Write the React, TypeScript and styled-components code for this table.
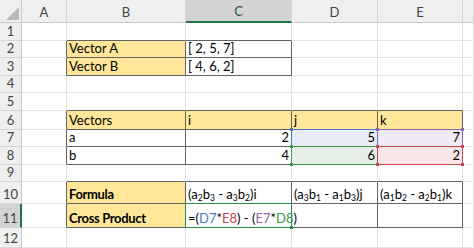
import React from 'react';
import styled, { createGlobalStyle } from 'styled-components';

const GlobalStyle = createGlobalStyle`
  html, body {
    margin: 0;
    padding: 0;
    background: #ffffff;
    overflow: hidden;
  }
  body {
    font-family: Lato, 'Liberation Sans', Arial, sans-serif;
  }
`;

const GRID = '#e1e1e1';
const DARK = '#626262';
const YELLOW = '#ffe699';

const COLS = ['A', 'B', 'C', 'D', 'E', 'F'];
const ROW_HEIGHTS = [18, 17, 18, 17, 18, 19, 17, 18, 17, 22, 24, 20];

const Sheet = styled.div`
  display: grid;
  grid-template-columns: 22px 45px 119px 106px 86px 85px 1fr;
  grid-template-rows: 23px ${ROW_HEIGHTS.map((h) => `${h}px`).join(' ')};
  width: 474px;
  height: 248px;
  overflow: hidden;
  font-size: 13px;
  color: #000;
`;

const Corner = styled.div`
  background: #efefef;
  border-right: 1px solid #c8c8c8;
  border-bottom: 1px solid #c8c8c8;
  box-sizing: border-box;
  display: flex;
  align-items: flex-end;
  justify-content: flex-end;
  padding: 0 2px 2px 0;
`;

const ColHead = styled.div<{ $selected?: boolean }>`
  box-sizing: border-box;
  background: ${({ $selected }) => ($selected ? '#d3d3d3' : '#efefef')};
  border-right: 1px solid #d6d6d6;
  border-bottom: ${({ $selected }) => ($selected ? '2px solid #217346' : '1px solid #c8c8c8')};
  color: ${({ $selected }) => ($selected ? '#1e5c3a' : '#444')};
  display: flex;
  align-items: center;
  justify-content: center;
  padding-top: 1px;
  font-size: 13px;
`;

const RowHead = styled.div<{ $selected?: boolean }>`
  box-sizing: border-box;
  background: ${({ $selected }) => ($selected ? '#d3d3d3' : '#efefef')};
  border-right: ${({ $selected }) => ($selected ? '2px solid #217346' : '1px solid #c8c8c8')};
  border-bottom: 1px solid #d6d6d6;
  color: #444;
  display: flex;
  align-items: flex-end;
  justify-content: center;
  padding-bottom: 1px;
  font-size: 13px;
`;

const Cell = styled.div<{
  $fill?: string;
  $bold?: boolean;
  $right?: boolean;
  $rb: string;
  $bb: string;
}>`
  position: relative;
  box-sizing: border-box;
  background: ${({ $fill }) => $fill || '#fff'};
  border-right: 1px solid ${({ $rb }) => $rb};
  border-bottom: 1px solid ${({ $bb }) => $bb};
  font-weight: ${({ $bold }) => ($bold ? 700 : 400)};
  letter-spacing: ${({ $bold }) => ($bold ? '-0.35px' : 'normal')};
  display: flex;
  align-items: flex-end;
  justify-content: ${({ $right }) => ($right ? 'flex-end' : 'flex-start')};
  padding: 0 2px 1px 2px;
  white-space: nowrap;
  line-height: 15px;

  sub {
    font-size: 8.5px;
    vertical-align: -2px;
    line-height: 0;
  }
`;

const CellText = styled.span`
  position: relative;
  z-index: 2;
`;

const RangeBox = styled.div<{ $color: string }>`
  position: absolute;
  top: -1px;
  left: -1px;
  right: -1px;
  bottom: -1px;
  border: 1px solid ${({ $color }) => $color};
  z-index: 1;
  pointer-events: none;
`;

const Handle = styled.span<{ $color: string; $v: 'top' | 'bottom'; $h: 'left' | 'right' }>`
  position: absolute;
  width: 3px;
  height: 3px;
  background: ${({ $color }) => $color};
  ${({ $v }) => $v}: -2px;
  ${({ $h }) => $h}: -2px;
`;

const Ref = styled.span<{ $color: string }>`
  color: ${({ $color }) => $color};
`;

const BLUE = '#4a76c6';
const RED = '#c4454f';
const PURPLE = '#8a68b0';
const GREEN = '#3a9a4e';

type CellDef = {
  v?: React.ReactNode;
  fill?: string;
  bold?: boolean;
  right?: boolean;
  box?: boolean;
  range?: string;
  handles?: boolean;
};

const sheet: Record<string, CellDef> = {
  B2: { v: 'Vector A', fill: YELLOW, box: true },
  C2: { v: '[ 2, 5, 7]', box: true },
  B3: { v: 'Vector B', fill: YELLOW, box: true },
  C3: { v: '[ 4, 6, 2]', box: true },

  B6: { v: 'Vectors', fill: YELLOW, box: true },
  C6: { v: 'i', fill: YELLOW, box: true },
  D6: { v: 'j', fill: YELLOW, box: true },
  E6: { v: 'k', fill: YELLOW, box: true },
  B7: { v: 'a', box: true },
  C7: { v: '2', right: true, box: true },
  D7: { v: '5', right: true, box: true, fill: '#e7ecf7', range: BLUE, handles: true },
  E7: { v: '7', right: true, box: true, fill: '#efeaf5', range: PURPLE, handles: true },
  B8: { v: 'b', box: true },
  C8: { v: '4', right: true, box: true },
  D8: { v: '6', right: true, box: true, fill: '#e6f0e7', range: GREEN, handles: true },
  E8: { v: '2', right: true, box: true, fill: '#f8e6e8', range: RED, handles: true },

  B10: { v: 'Formula', fill: YELLOW, bold: true, box: true },
  C10: {
    v: (
      <>
        (a<sub>2</sub>b<sub>3</sub> - a<sub>3</sub>b<sub>2</sub>)i
      </>
    ),
    box: true,
  },
  D10: {
    v: (
      <>
        (a<sub>3</sub>b<sub>1</sub> - a<sub>1</sub>b<sub>3</sub>)j
      </>
    ),
    box: true,
  },
  E10: {
    v: (
      <>
        (a<sub>1</sub>b<sub>2</sub> - a<sub>2</sub>b<sub>1</sub>)k
      </>
    ),
    box: true,
  },
  B11: { v: 'Cross Product', fill: YELLOW, bold: true, box: true },
  C11: {
    v: (
      <>
        =(<Ref $color={BLUE}>D7</Ref>*<Ref $color={RED}>E8</Ref>) - (
        <Ref $color={PURPLE}>E7</Ref>*<Ref $color={GREEN}>D8</Ref>)
      </>
    ),
    box: true,
    range: '#2e8b4f',
  },
  D11: { box: true },
  E11: { box: true },
};

const isBox = (col: number, row: number) => {
  const c = COLS[col];
  if (!c) return false;
  return !!sheet[`${c}${row}`]?.box;
};

const CornerTriangle = () => (
  <svg width="13" height="13" viewBox="0 0 13 13">
    <polygon points="13,0 13,13 0,13" fill="#b9b9b9" />
  </svg>
);

export default function App() {
  const rows = ROW_HEIGHTS.map((_, i) => i + 1);
  return (
    <>
      <GlobalStyle />
      <Sheet>
        <Corner>
          <CornerTriangle />
        </Corner>
        {COLS.map((c) => (
          <ColHead key={c} $selected={c === 'C'}>
            {c === 'F' ? '' : c}
          </ColHead>
        ))}
        {rows.map((r) => (
          <React.Fragment key={r}>
            <RowHead $selected={r === 11}>{r}</RowHead>
            {COLS.map((c, ci) => {
              const def = sheet[`${c}${r}`] || {};
              const rb = isBox(ci, r) || isBox(ci + 1, r) ? DARK : GRID;
              const bb = isBox(ci, r) || isBox(ci, r + 1) ? DARK : GRID;
              return (
                <Cell
                  key={c}
                  $fill={def.fill}
                  $bold={def.bold}
                  $right={def.right}
                  $rb={rb}
                  $bb={bb}
                >
                  {def.range && (
                    <RangeBox $color={def.range}>
                      {def.handles ? (
                        <>
                          <Handle $color={def.range} $v="top" $h="left" />
                          <Handle $color={def.range} $v="top" $h="right" />
                          <Handle $color={def.range} $v="bottom" $h="left" />
                          <Handle $color={def.range} $v="bottom" $h="right" />
                        </>
                      ) : (
                        <Handle $color={def.range} $v="bottom" $h="right" />
                      )}
                    </RangeBox>
                  )}
                  {def.v !== undefined && <CellText>{def.v}</CellText>}
                </Cell>
              );
            })}
          </React.Fragment>
        ))}
      </Sheet>
    </>
  );
}
